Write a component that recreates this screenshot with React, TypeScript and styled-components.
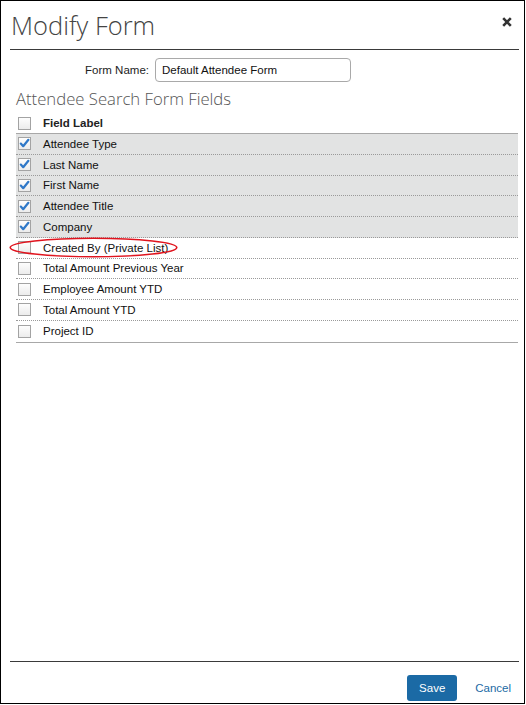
import React from "react";
import styled, { createGlobalStyle } from "styled-components";

const Global = createGlobalStyle`
  html, body { margin: 0; padding: 0; background: #fff; }
  body { font-family: "Liberation Sans", Arial, sans-serif; }
  * { box-sizing: border-box; }
`;

const Frame = styled.div`
  width: 525px;
  height: 704px;
  border: 1px solid #000;
  display: flex;
  flex-direction: column;
  background: #fff;
`;

const Header = styled.div`
  margin: 0 5px 0 9px;
  height: 49px;
  border-bottom: 1px solid #3a3a3a;
  display: flex;
  justify-content: space-between;
  align-items: center;
  padding-left: 1px;
`;

const Title = styled.h1`
  margin: 0;
  font-family: "Open Sans", sans-serif;
  font-weight: 300;
  font-size: 25.5px;
  color: #444;
  line-height: 36px;
  margin-top: 0px;
`;

const Close = styled.button`
  align-self: flex-start;
  margin-top: 16px;
  margin-right: 7px;
  width: 10px;
  height: 10px;
  padding: 0;
  border: 0;
  background: none;
  display: flex;
  cursor: pointer;
`;

const Body = styled.div`
  flex: 1;
  display: flex;
  flex-direction: column;
`;

const NameRow = styled.div`
  margin-top: 8px;
  display: flex;
  align-items: center;
  gap: 6px;
`;

const NameLabel = styled.label`
  width: 148px;
  text-align: right;
  font-size: 11.5px;
  color: #222;
`;

const NameInput = styled.input`
  width: 196px;
  height: 24px;
  border: 1px solid #a9a9a9;
  border-radius: 4px;
  padding: 0 6px;
  font-family: "Liberation Sans", Arial, sans-serif;
  font-size: 11.5px;
  color: #111;
  outline: none;
`;

const SectionTitle = styled.h2`
  margin: 5px 0 0 15px;
  font-family: "Open Sans", sans-serif;
  font-weight: 300;
  font-size: 16.7px;
  line-height: 23px;
  color: #555;
`;

const Table = styled.div`
  margin: 1px 6px 0 15px;
  display: flex;
  flex-direction: column;
  border-bottom: 1px solid #a8a8a8;
`;

const HeadRow = styled.div`
  height: 23px;
  display: flex;
  align-items: center;
  gap: 12px;
  padding-left: 2px;
  padding-top: 2px;
  border-bottom: 1px solid #a8a8a8;
  font-size: 11.5px;
  font-weight: bold;
  color: #222;
`;

const Row = styled.div<{ $checked?: boolean; $last?: boolean }>`
  position: relative;
  height: 20.75px;
  display: flex;
  align-items: center;
  gap: 12px;
  padding-left: 2px;
  background: ${(p) => (p.$checked ? "#e2e3e3" : "#fff")};
  border-bottom: ${(p) => (p.$last ? "0" : "1px dotted #9a9a9a")};
  font-size: 11.5px;
  color: #111;
`;

const Box = styled.span`
  width: 13px;
  height: 13px;
  flex: none;
  border: 1px solid #a3a3a3;
  background: linear-gradient(#fdfdfd, #ececec);
  display: flex;
  align-items: center;
  justify-content: center;
`;

const Highlight = styled.span`
  position: absolute;
  display: block;
  left: -7px;
  top: -1px;
  width: 169px;
  height: 21px;
  pointer-events: none;
  svg { display: block; }
`;

const Footer = styled.div`
  margin: 0 5px 0 9px;
  border-top: 1px solid #3a3a3a;
  padding: 13px 8px 2px 0;
  display: flex;
  justify-content: flex-end;
  align-items: center;
  gap: 18px;
`;

const SaveButton = styled.button`
  width: 50px;
  height: 26px;
  border: 0;
  border-radius: 3px;
  background: #1b6aa5;
  color: #fff;
  font-family: "Liberation Sans", Arial, sans-serif;
  font-size: 11.5px;
  padding: 0;
  cursor: pointer;
`;

const CancelLink = styled.button`
  border: 0;
  background: none;
  padding: 0;
  color: #1b6aa5;
  font-family: "Liberation Sans", Arial, sans-serif;
  font-size: 11.5px;
  cursor: pointer;
`;

const fields: { label: string; checked: boolean }[] = [
  { label: "Attendee Type", checked: true },
  { label: "Last Name", checked: true },
  { label: "First Name", checked: true },
  { label: "Attendee Title", checked: true },
  { label: "Company", checked: true },
  { label: "Created By (Private List)", checked: false },
  { label: "Total Amount Previous Year", checked: false },
  { label: "Employee Amount YTD", checked: false },
  { label: "Total Amount YTD", checked: false },
  { label: "Project ID", checked: false },
];

function Check({ checked }: { checked?: boolean }) {
  return (
    <Box>
      {checked && (
        <svg width="11" height="11" viewBox="0 0 11 11">
          <path d="M1.8 5.6 L4.2 8.2 L9.4 1.8" fill="none" stroke="#2f78c8" strokeWidth="2.2" strokeLinecap="round" strokeLinejoin="round" />
        </svg>
      )}
    </Box>
  );
}

export default function App() {
  return (
    <>
      <Global />
      <Frame>
        <Header>
          <Title>Modify Form</Title>
          <Close aria-label="Close">
            <svg width="10" height="10" viewBox="0 0 10 10">
              <path d="M1.2 1.2 L8.8 8.8 M8.8 1.2 L1.2 8.8" stroke="#333" strokeWidth="2.6" strokeLinecap="butt" />
            </svg>
          </Close>
        </Header>
        <Body>
          <NameRow>
            <NameLabel>Form Name:</NameLabel>
            <NameInput defaultValue="Default Attendee Form" />
          </NameRow>
          <SectionTitle>Attendee Search Form Fields</SectionTitle>
          <Table>
            <HeadRow>
              <Check />
              <span>Field Label</span>
            </HeadRow>
            {fields.map((f, i) => (
              <Row key={f.label} $checked={f.checked} $last={i === fields.length - 1}>
                <Check checked={f.checked} />
                <span>{f.label}</span>
                {f.label === "Created By (Private List)" && (
                  <Highlight>
                    <svg width="169" height="21" viewBox="0 0 169 21">
                      <ellipse cx="84.5" cy="10.5" rx="83.3" ry="9.3" fill="none" stroke="#e0141e" strokeWidth="1.6" />
                    </svg>
                  </Highlight>
                )}
              </Row>
            ))}
          </Table>
        </Body>
        <Footer>
          <SaveButton>Save</SaveButton>
          <CancelLink>Cancel</CancelLink>
        </Footer>
      </Frame>
    </>
  );
}
